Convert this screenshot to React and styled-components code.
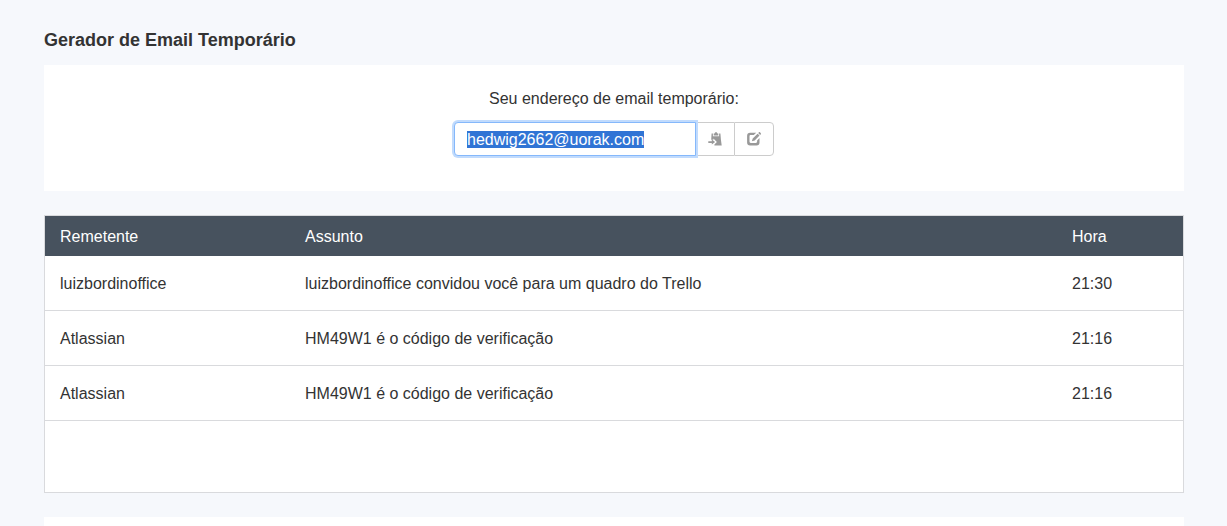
import React from "react";
import styled, { createGlobalStyle } from "styled-components";

const GlobalStyle = createGlobalStyle`
  * { box-sizing: border-box; }
  body {
    margin: 0;
    background: #f6f8fc;
    color: #333;
    font: 16px/24px Arial, "Liberation Sans", sans-serif;
    overflow: hidden;
  }
`;

const Page = styled.main`
  width: 1140px;
  height: 526px;
  margin-left: 44px;
  padding-top: 28px;
  overflow: hidden;
`;

const Title = styled.h1`
  margin: 0 0 13px;
  font-size: 18px;
  line-height: 24px;
  font-weight: bold;
`;

const Card = styled.section`
  display: flex;
  flex-direction: column;
  align-items: center;
  height: 126px;
  padding-top: 22px;
  background: #fff;
`;

const Label = styled.label`
  margin-bottom: 11px;
`;

const InputGroup = styled.div`
  display: flex;
  width: 320px;
  height: 34px;
`;

const Address = styled.div`
  z-index: 1;
  width: 242px;
  padding: 8px 12px;
  line-height: 17px;
  background: #fff;
  border: 1px solid #85b8fb;
  border-radius: 4px 0 0 4px;
  box-shadow: 0 0 0 2px #c1dbfd;
`;

const Selected = styled.span`
  display: inline-block;
  height: 17px;
  color: #fff;
  background: #3074d5;
`;

const IconButton = styled.button`
  display: flex;
  align-items: center;
  justify-content: center;
  width: ${(p) => (p.$last ? 40 : 38)}px;
  padding: 0;
  color: #999;
  background: #fff;
  border: 1px solid #ccc;
  border-left-width: ${(p) => (p.$last ? 1 : 0)}px;
  border-right-width: ${(p) => (p.$last ? 1 : 0)}px;
  border-radius: ${(p) => (p.$last ? "0 4px 4px 0" : "0")};
`;

const Icon = styled.svg`
  display: block;
  width: 14px;
  height: 14px;
`;

const Inbox = styled.section`
  height: 278px;
  margin: 24px 0;
  background: #fff;
  border: 1px solid #d9dadd;
`;

const Row = styled.div`
  display: grid;
  grid-template-columns: 245px 767px 1fr;
  align-items: center;
  height: 55px;
  padding: 2px 0 0 15px;
  border-bottom: 1px solid #d9dadd;
`;

const HeaderRow = styled(Row)`
  height: 40px;
  color: #fff;
  background: #47525e;
  border-bottom: 0;
`;

const NextCard = styled.section`
  height: 40px;
  background: #fff;
`;

const messages = [
  ["luizbordinoffice", "luizbordinoffice convidou você para um quadro do Trello", "21:30"],
  ["Atlassian", "HM49W1 é o código de verificação", "21:16"],
  ["Atlassian", "HM49W1 é o código de verificação", "21:16"],
];

function PasteIcon() {
  return (
    <Icon viewBox="0 0 14 14" fill="currentColor">
      <path d="M3.6 1.6h1.3v2.6h6.2V1.6h1.3l.5 6 .8 6H6.4v-1L8.9 10 5.4 6.6v1.2H3.2z" />
      <path d="M5.7 3.4V1.6h.9C6.8.7 7.2.2 8 .2s1.2.5 1.4 1.4h.9v1.8z" />
      <path d="M.3 9.2h3.5V7.6L7.1 10l-3.3 2.6V11H.3z" />
    </Icon>
  );
}

function EditIcon() {
  return (
    <Icon viewBox="0 0 14 14" fill="currentColor">
      <path d="M9.2.7 6.8 3.1H3.8c-.9 0-1.3.4-1.3 1.2v5.3c0 .9.4 1.3 1.3 1.3h5c.9 0 1.3-.4 1.3-1.3V8.4l2.4-2.4v4.4c0 2-1 3-3 3H3.1c-2 0-3-1-3-3V3.7c0-2 1-3 3-3z" />
      <path d="m10.6 1.7 1.9 1.9-4.8 4.8-2.8.9.8-2.8zM11.2 1.1l.8-.8c.3-.3.7-.3 1 0l.8.9c.3.3.3.7 0 1l-.7.8z" />
    </Icon>
  );
}

export default function App() {
  return (
    <>
      <GlobalStyle />
      <Page>
        <Title>Gerador de Email Temporário</Title>
        <Card>
          <Label>Seu endereço de email temporário:</Label>
          <InputGroup>
            <Address><Selected>hedwig2662@uorak.com</Selected></Address>
            <IconButton aria-label="Copiar"><PasteIcon /></IconButton>
            <IconButton $last aria-label="Editar"><EditIcon /></IconButton>
          </InputGroup>
        </Card>
        <Inbox>
          <HeaderRow>
            <span>Remetente</span>
            <span>Assunto</span>
            <span>Hora</span>
          </HeaderRow>
          {messages.map(([sender, subject, time], i) => (
            <Row key={i}>
              <span>{sender}</span>
              <span>{subject}</span>
              <span>{time}</span>
            </Row>
          ))}
        </Inbox>
        <NextCard />
      </Page>
    </>
  );
}
